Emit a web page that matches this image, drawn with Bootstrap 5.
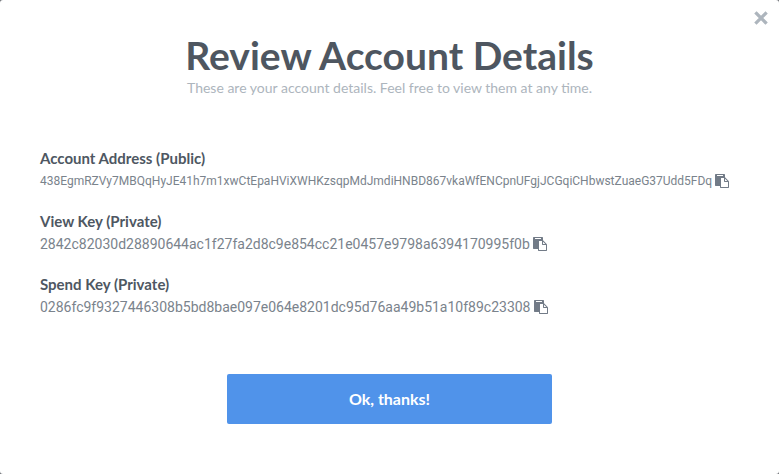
<!DOCTYPE html>
<html lang="en">
<head>
<meta charset="utf-8">
<meta name="viewport" content="width=device-width, initial-scale=1">
<title>Review Account Details</title>
<link href="https://cdn.jsdelivr.net/npm/bootstrap@5.3.0/dist/css/bootstrap.min.css" rel="stylesheet">
<style>
  body { background: #6f7277; font-family: Lato, "Open Sans", sans-serif; color: #7a838c; }
  .dialog-panel { border-radius: 3px; padding: 31px 40px 50px; }
  .dialog-title { font-size: 39px; line-height: 48px; font-weight: 700; color: #4e5660; }
  .dialog-note { font-size: 14px; line-height: 18px; color: #adb5bd; }
  .close-btn { top: 8px; right: 8px; color: #adb5bd; line-height: 0; }
  .icon-btn { color: #727b87; line-height: 0; }
  .details { margin-top: 50px; margin-bottom: 55px; }
  .details dt { font-size: 15px; line-height: 22px; color: #4e5762; }
  .details dd { font-family: Roboto, sans-serif; font-size: 14px; line-height: 24px; margin-bottom: 17px; gap: 3px; }
  .details .address { font-size: 12px; }
  .confirm-btn { width: 325px; height: 50px; border-radius: 2px; background: #5093ea; color: #fff; font-size: 16px; font-weight: 700; }
  .confirm-btn:hover { background: #3f84de; color: #fff; }
</style>
</head>
<body>
<svg class="d-none" aria-hidden="true">
  <symbol id="paste" viewBox="0 0 1792 1792"><path fill="currentColor" d="M768 1664h896v-640h-416q-40 0-68-28t-28-68v-416h-384v1152zm256-1440v-64q0-13-9.500-22.500t-22.500-9.500h-704q-13 0-22.500 9.500t-9.500 22.500v64q0 13 9.500 22.500t22.500 9.500h704q13 0 22.500-9.500t9.500-22.500zm256 672h299l-299-299v299zm512 128v672q0 40-28 68t-68 28h-960q-40 0-68-28t-28-68v-160h-544q-40 0-68-28t-28-68v-1344q0-40 28-68t68-28h1088q40 0 68 28t28 68v328q21 13 36 28l408 408q28 28 48 76t20 88z"/></symbol>
</svg>
<main class="dialog-panel bg-white position-relative min-vh-100" role="dialog" aria-labelledby="title">
  <button type="button" class="close-btn btn p-0 border-0 position-absolute" aria-label="Close">
    <svg width="20" height="20" viewBox="0 0 20 20" aria-hidden="true"><path fill="none" stroke="currentColor" stroke-width="3.200" stroke-linecap="square" d="M5.500 5.500l9 9M14.500 5.500l-9 9"/></svg>
  </button>
  <header class="text-center">
    <h1 id="title" class="dialog-title mb-0">Review Account Details</h1>
    <p class="dialog-note mb-0">These are your account details. Feel free to view them at any time.</p>
  </header>
  <dl class="details">
    <dt>Account Address (Public)</dt>
    <dd class="d-flex align-items-center"><span class="address">438EgmRZVy7MBQqHyJE41h7m1xwCtEpaHViXWHKzsqpMdJmdiHNBD867vkaWfENCpnUFgjJCGqiCHbwstZuaeG37Udd5FDq</span><button type="button" class="icon-btn btn p-0 border-0" aria-label="Copy account address"><svg width="14" height="14" aria-hidden="true"><use href="#paste"/></svg></button></dd>
    <dt>View Key (Private)</dt>
    <dd class="d-flex align-items-center"><span>2842c82030d28890644ac1f27fa2d8c9e854cc21e0457e9798a6394170995f0b</span><button type="button" class="icon-btn btn p-0 border-0" aria-label="Copy view key"><svg width="14" height="14" aria-hidden="true"><use href="#paste"/></svg></button></dd>
    <dt>Spend Key (Private)</dt>
    <dd class="d-flex align-items-center"><span>0286fc9f9327446308b5bd8bae097e064e8201dc95d76aa49b51a10f89c23308</span><button type="button" class="icon-btn btn p-0 border-0" aria-label="Copy spend key"><svg width="14" height="14" aria-hidden="true"><use href="#paste"/></svg></button></dd>
  </dl>
  <div class="text-center"><button type="button" class="confirm-btn btn border-0 mw-100">Ok, thanks!</button></div>
</main>
<script src="https://cdn.jsdelivr.net/npm/bootstrap@5.3.0/dist/js/bootstrap.bundle.min.js"></script>
</body>
</html>
